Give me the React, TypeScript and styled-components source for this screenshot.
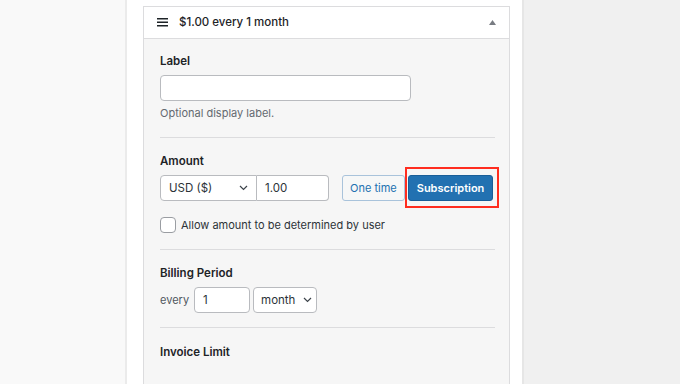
import styled, { createGlobalStyle } from "styled-components";

const GlobalStyle = createGlobalStyle`
  html, body {
    margin: 0;
    padding: 0;
  }
  body {
    font-family: Inter, "Liberation Sans", sans-serif;
    color: #1d2327;
    -webkit-font-smoothing: antialiased;
  }
  * {
    box-sizing: border-box;
  }
`;

const Page = styled.div`
  display: flex;
  height: 384px;
  width: 680px;
  overflow: hidden;
  background: #f0f0f0;
`;

const SidePane = styled.div`
  width: 127px;
  flex-shrink: 0;
  background: #f9f9f9;
  border-right: 2px solid #ebebeb;
`;

const Column = styled.div`
  width: 397px;
  flex-shrink: 0;
  background: #ffffff;
  border-right: 2px solid #e6e6e6;
  padding: 6px 12px 0 16px;
`;

const Card = styled.div`
  border: 1px solid #dcdcde;
  border-bottom: none;
  height: 100%;
  background: #f6f6f6;
`;

const CardHeader = styled.div`
  display: flex;
  align-items: center;
  height: 32px;
  padding: 0 13px 1px 13px;
  background: #ffffff;
  border-bottom: 1px solid #dcdcde;
`;

const HeaderTitle = styled.div`
  flex: 1;
  margin-left: 11px;
  font-size: 11.5px;
  font-weight: 500;
  color: #1d2327;
`;

const CardBody = styled.div`
  padding: 0 14px 0 16px;
`;

const Section = styled.div<{ $top: number; $bottom: number; $last?: boolean }>`
  padding: ${({ $top, $bottom }) => `${$top}px 0 ${$bottom}px`};
  border-bottom: ${({ $last }) => ($last ? "none" : "1px solid #dcdcde")};
`;

const FieldLabel = styled.div`
  font-size: 11.5px;
  line-height: 18px;
  font-weight: 600;
  color: #1d2327;
  margin-bottom: 5px;
`;

const TextInput = styled.div<{ $width: number }>`
  width: ${({ $width }) => $width}px;
  height: 26px;
  flex-shrink: 0;
  background: #ffffff;
  border: 1px solid #b9bbbf;
  border-radius: 4px;
  display: flex;
  align-items: center;
  padding: 0 8px;
  font-size: 11.5px;
  color: #2c3338;
`;

const HelpText = styled.div`
  margin-top: 3px;
  font-size: 11px;
  line-height: 18px;
  color: #646970;
`;

const Row = styled.div`
  display: flex;
  align-items: center;
`;

const Joined = styled.div`
  display: flex;
`;

const SelectBox = styled.div<{ $width: number; $joined?: boolean }>`
  width: ${({ $width }) => $width}px;
  height: 26px;
  flex-shrink: 0;
  background: #ffffff;
  border: 1px solid #b9bbbf;
  border-radius: ${({ $joined }) => ($joined ? "4px 0 0 4px" : "4px")};
  display: flex;
  align-items: center;
  justify-content: space-between;
  padding: ${({ $joined }) => ($joined ? "0 8px 0 8px" : "0 4px 0 7px")};
  font-size: 11.5px;
  color: #2c3338;
`;

const JoinedInput = styled(TextInput)`
  border-left: none;
  border-radius: 0 4px 4px 0;
`;

const ToggleGroup = styled.div`
  display: flex;
  gap: 3px;
  margin-left: 13px;
`;

const ToggleButton = styled.div<{ $active?: boolean }>`
  height: 26px;
  display: flex;
  align-items: center;
  white-space: nowrap;
  padding: ${({ $active }) => ($active ? "0 8px" : "0 7px")};
  border-radius: 3px;
  font-size: 11px;
  font-weight: ${({ $active }) => ($active ? 600 : 400)};
  color: ${({ $active }) => ($active ? "#ffffff" : "#2271b1")};
  background: ${({ $active }) => ($active ? "#2271b1" : "#f6f7f7")};
  border: 1px solid ${({ $active }) => ($active ? "#1a5e98" : "#a9c3db")};
`;

const Highlight = styled.div`
  position: relative;
`;

const HighlightFrame = styled.div`
  position: absolute;
  top: -8px;
  bottom: -7px;
  left: -3px;
  right: -6px;
  border: 2.5px solid #ff2d1f;
  pointer-events: none;
`;

const CheckRow = styled.label`
  display: flex;
  align-items: center;
  gap: 5px;
  margin-top: 16px;
  font-size: 11px;
  color: #2c3338;
`;

const CheckBox = styled.span`
  width: 16px;
  height: 16px;
  border: 1px solid #9a9da2;
  border-radius: 4px;
  background: #ffffff;
`;

const Prefix = styled.span`
  font-size: 11px;
  color: #50575e;
  margin-right: 5px;
`;

const Gap = styled.span`
  width: 3px;
`;

const Chevron = () => (
  <svg width="9" height="6" viewBox="0 0 9 6">
    <polyline points="1,1 4.5,4.5 8,1" fill="none" stroke="#3c434a" strokeWidth="1.2" />
  </svg>
);

const MenuIcon = () => (
  <svg width="11" height="9" viewBox="0 0 11 9">
    <rect x="0" y="0" width="11" height="1.5" fill="#1d2327" />
    <rect x="0" y="3.5" width="11" height="1.5" fill="#1d2327" />
    <rect x="0" y="7" width="11" height="1.5" fill="#1d2327" />
  </svg>
);

const CollapseIcon = () => (
  <svg width="7" height="5" viewBox="0 0 7 5">
    <polygon points="3.5,0 7,5 0,5" fill="#787c82" />
  </svg>
);

const App = () => {
  return (
    <>
      <GlobalStyle />
      <Page>
        <SidePane />
        <Column>
          <Card>
            <CardHeader>
              <MenuIcon />
              <HeaderTitle>$1.00 every 1 month</HeaderTitle>
              <CollapseIcon />
            </CardHeader>
            <CardBody>
              <Section $top={13} $bottom={15}>
                <FieldLabel>Label</FieldLabel>
                <TextInput $width={251} />
                <HelpText>Optional display label.</HelpText>
              </Section>

              <Section $top={14} $bottom={16}>
                <FieldLabel>Amount</FieldLabel>
                <Row>
                  <Joined>
                    <SelectBox $width={97} $joined>
                      USD ($)
                      <Chevron />
                    </SelectBox>
                    <JoinedInput $width={72}>1.00</JoinedInput>
                  </Joined>
                  <ToggleGroup>
                    <ToggleButton>One time</ToggleButton>
                    <Highlight>
                      <ToggleButton $active>Subscription</ToggleButton>
                      <HighlightFrame />
                    </Highlight>
                  </ToggleGroup>
                </Row>
                <CheckRow>
                  <CheckBox />
                  Allow amount to be determined by user
                </CheckRow>
              </Section>

              <Section $top={14} $bottom={14}>
                <FieldLabel>Billing Period</FieldLabel>
                <Row>
                  <Prefix>every</Prefix>
                  <TextInput $width={56}>1</TextInput>
                  <Gap />
                  <SelectBox $width={64}>
                    month
                    <Chevron />
                  </SelectBox>
                </Row>
              </Section>

              <Section $top={15} $bottom={0} $last>
                <FieldLabel>Invoice Limit</FieldLabel>
              </Section>
            </CardBody>
          </Card>
        </Column>
      </Page>
    </>
  );
};

export default App;
